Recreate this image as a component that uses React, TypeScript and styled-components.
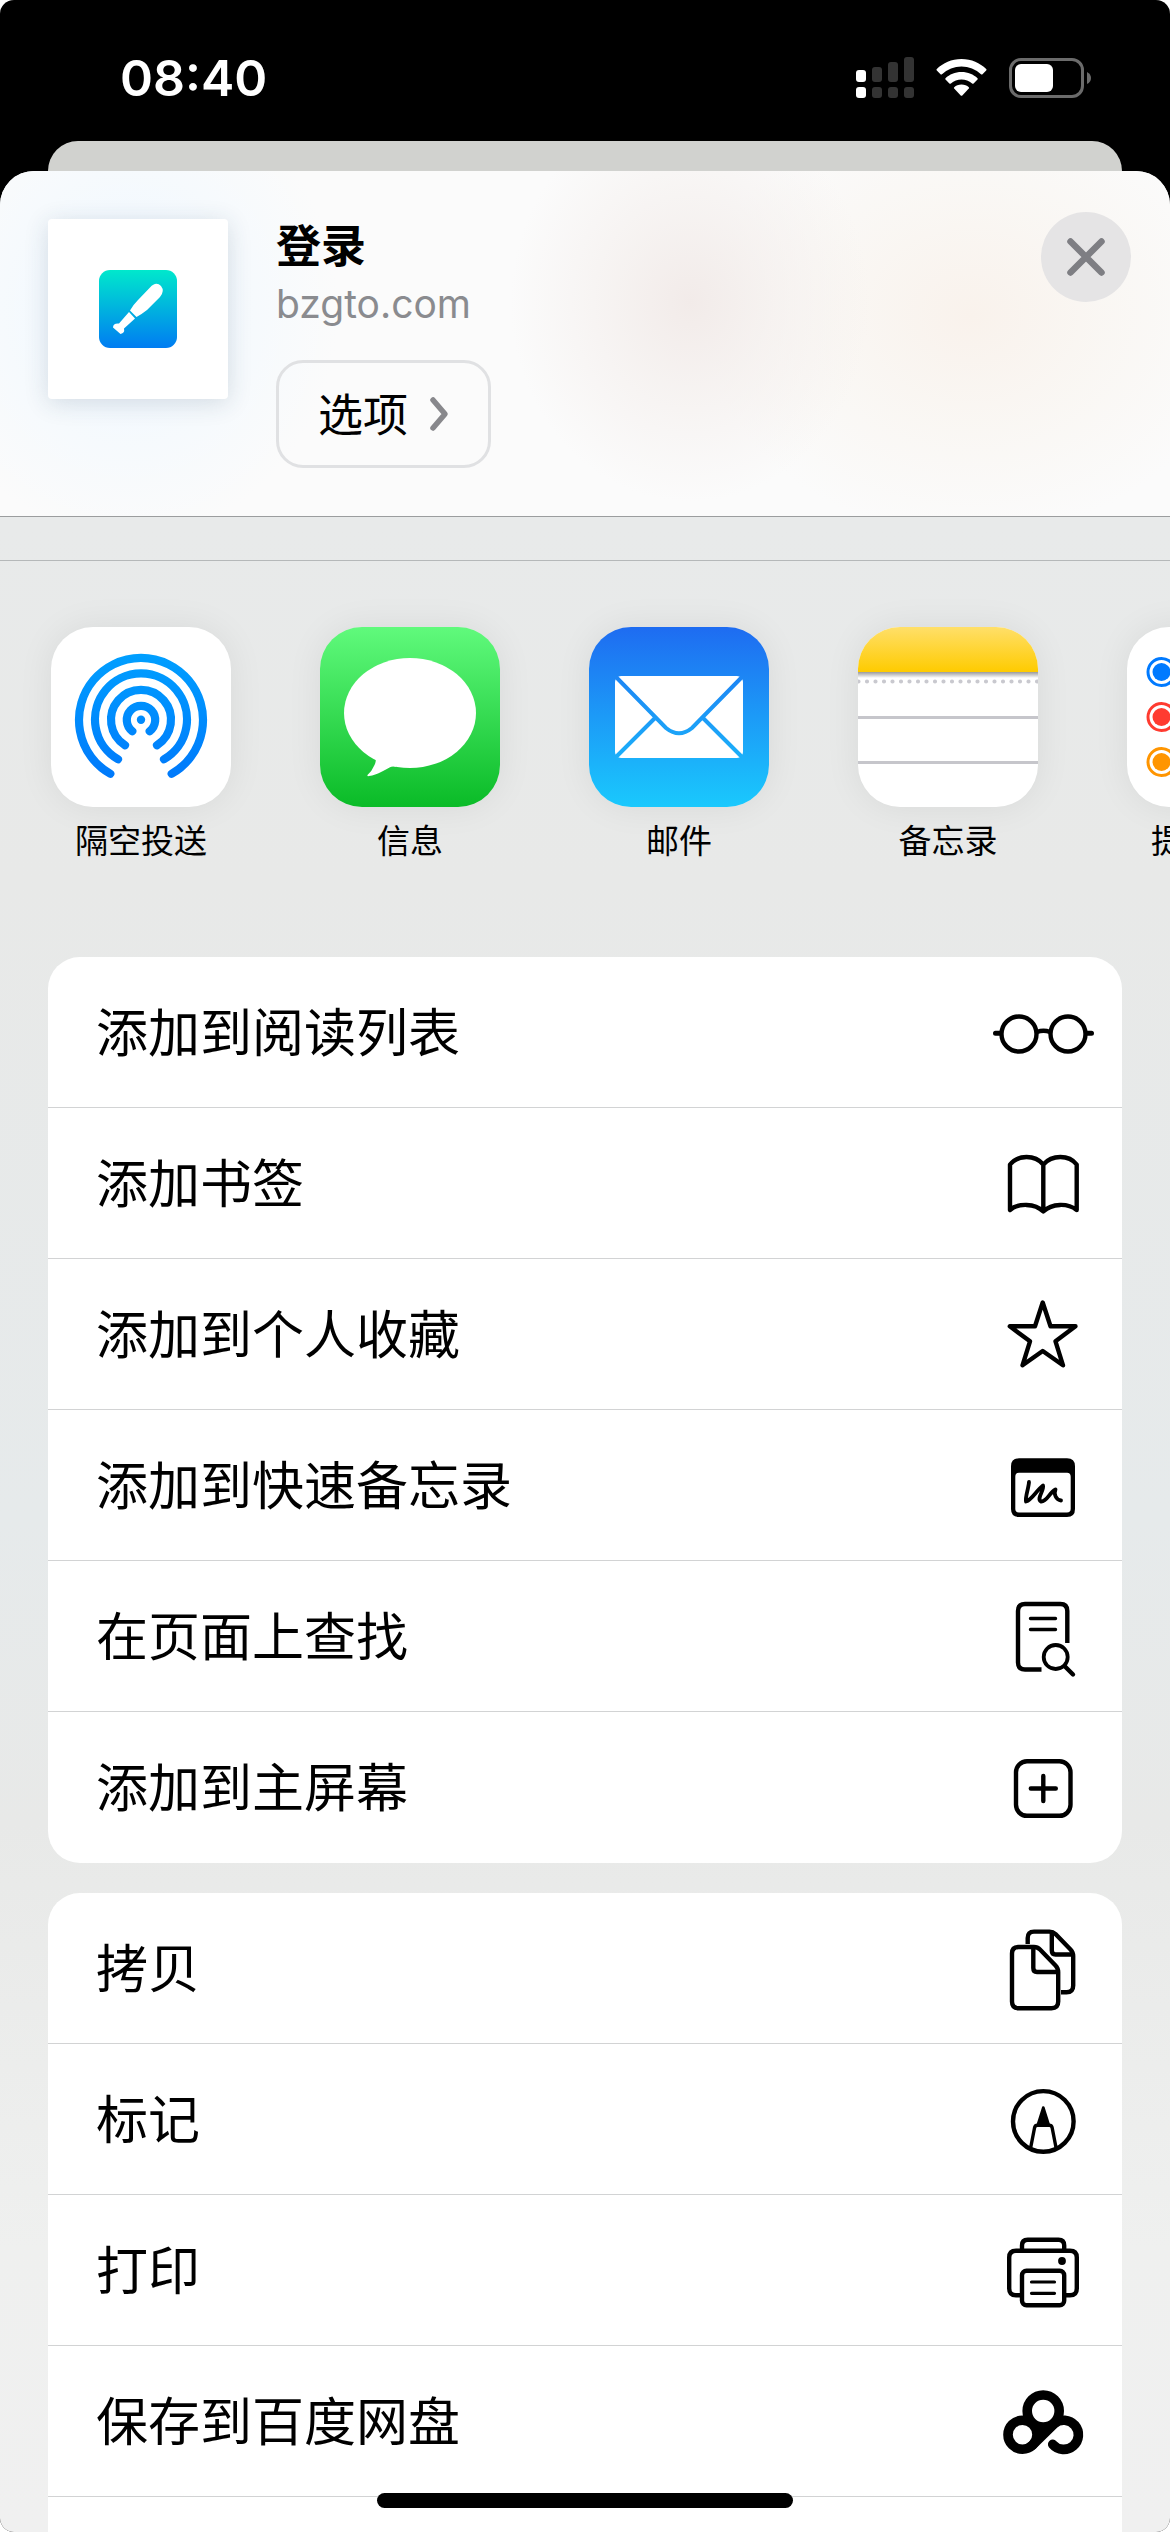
import React from "react";
import styled, { createGlobalStyle } from "styled-components";

const GlobalStyle = createGlobalStyle`
  * { box-sizing: border-box; }
  body {
    margin: 0;
    background: #fff;
    color: #000;
    font-family: Inter, "Noto Sans CJK SC", sans-serif;
  }
  button {
    margin: 0;
    padding: 0;
    border: 0;
    background: none;
    color: inherit;
    font: inherit;
    cursor: pointer;
  }
  h1, p, ul { margin: 0; padding: 0; }
  ul { list-style: none; }
  svg { display: block; flex: none; }
`;

const Screen = styled.div`
  position: relative;
  display: flex;
  flex-direction: column;
  height: 100vh;
  overflow: hidden;
  background: #000;
  border-radius: 14px;
`;

const StatusBar = styled.header`
  display: flex;
  align-items: center;
  justify-content: space-between;
  flex: none;
  height: 141px;
  padding: 15px 78px 0 120px;
  color: #fff;
`;

const Clock = styled.time`
  font-size: 50px;
  font-weight: 600;
  line-height: 60px;
`;

const BackSheet = styled.div`
  flex: none;
  height: 30px;
  margin: 0 48px;
  background: #d1d2cf;
  border-radius: 30px 30px 0 0;
`;

const Sheet = styled.main`
  display: flex;
  flex-direction: column;
  flex: 1;
  min-height: 0;
  overflow: hidden;
  border-radius: 34px 34px 0 0;
  background: linear-gradient(
    180deg,
    #e8eaea 15%,
    #e8e9e8 30%,
    #e6eaeb 57%,
    #e8e9e8 70%,
    #eff0ef 88%,
    #f0f0f0 100%
  );
`;

const SheetHeader = styled.section`
  display: flex;
  align-items: flex-start;
  flex: none;
  height: 346px;
  padding: 41px 39px 0 48px;
  border-bottom: 1px solid #9b9d9e;
  background:
    radial-gradient(210px 230px at 11% 40%, #ecf5ff 0%, #f2f9ffb0 50%, #fbfbfb00 100%),
    radial-gradient(180px 200px at 59% 38%, #f2ebe9 0%, #f4efedb0 45%, #fbfbfb00 100%),
    radial-gradient(270px 220px at 83% 42%, #f9f2ec 0%, #f9f5f0b0 50%, #fbfbfb00 100%),
    #fbfbfb;
`;

const Thumbnail = styled.div`
  display: grid;
  place-items: center;
  flex: none;
  width: 180px;
  height: 180px;
  margin-top: 7px;
  background: #fff;
  border-radius: 4px;
  box-shadow: 0 4px 24px rgba(40, 60, 90, 0.16);
`;

const SiteInfo = styled.div`
  display: flex;
  flex-direction: column;
  align-items: flex-start;
  flex: 1;
  margin-left: 48px;
`;

const SiteTitle = styled.h1`
  padding-top: 2px;
  font-size: 45px;
  font-weight: 700;
  line-height: 66px;
`;

const SiteDomain = styled.p`
  font-size: 39px;
  line-height: 48px;
  color: #8a8b8f;
`;

const OptionsButton = styled.button`
  display: flex;
  align-items: center;
  gap: 21px;
  height: 108px;
  margin-top: 32px;
  padding: 0 39px;
  border: 3px solid #e0e1e3;
  border-radius: 27px;
  font-size: 45px;
  line-height: 66px;
`;

const CloseButton = styled.button`
  display: grid;
  place-items: center;
  flex: none;
  width: 90px;
  height: 90px;
  border-radius: 50%;
  background: #e5e4e5;
`;

const SheetDivider = styled.div`
  flex: none;
  height: 44px;
  border-bottom: 1px solid #b5b8b9;
`;

const AppRow = styled.ul`
  display: flex;
  flex: none;
  gap: 89px;
  padding: 66px 51px 96px;
  overflow: hidden;
`;

const AppButton = styled.button`
  display: flex;
  flex-direction: column;
  align-items: center;
  gap: 14px;
  width: 180px;
  font-size: 33px;
  line-height: 40px;
  white-space: nowrap;
`;

const AppTile = styled.span<{ $fill: string }>`
  display: block;
  width: 180px;
  height: 180px;
  overflow: hidden;
  border-radius: 42px;
  background: ${(p) => p.$fill};
  box-shadow: 0 0 36px rgba(0, 0, 0, 0.07);
`;

const ActionCard = styled.ul<{ $open?: boolean }>`
  flex: ${(p) => (p.$open ? "1" : "none")};
  min-height: 0;
  margin: 0 48px ${(p) => (p.$open ? "0" : "30px")};
  overflow: hidden;
  background: #fff;
  border-radius: ${(p) => (p.$open ? "32px 32px 0 0" : "32px")};
`;

const ActionItem = styled.li<{ $line: boolean }>`
  height: 151px;
  border-bottom: 1px solid ${(p) => (p.$line ? "#d2d3d4" : "transparent")};
`;

const ActionButton = styled.button`
  display: flex;
  align-items: center;
  justify-content: space-between;
  width: 100%;
  height: 100%;
  padding: 0 27px 0 48px;
  text-align: left;
`;

const ButtonLabel = styled.span`
  padding-top: 4px;
`;

const ActionLabel = styled(ButtonLabel)`
  font-size: 52px;
  line-height: 76px;
`;

const HomeIndicator = styled.div`
  position: absolute;
  bottom: 24px;
  left: 50%;
  width: 416px;
  height: 15px;
  margin-left: -208px;
  border-radius: 8px;
  background: #000;
`;

const StatusIcons = () => (
  <svg width="236" height="42" viewBox="0 0 236 42" role="img" aria-label="信号、无线局域网、电池">
    <g fill="#fff">
      <rect x="0" y="13" width="10" height="12" rx="3" />
      <rect x="0" y="30" width="10" height="11" rx="3" />
    </g>
    <g fill="#333">
      <rect x="16" y="10" width="10" height="15" rx="3" />
      <rect x="32" y="5" width="10" height="20" rx="3" />
      <rect x="48" y="0" width="10" height="25" rx="3" />
      <rect x="16" y="30" width="10" height="11" rx="3" />
      <rect x="32" y="30" width="10" height="11" rx="3" />
      <rect x="48" y="30" width="10" height="11" rx="3" />
    </g>
    <g fill="#fff">
      <path d="M105.500 2 C95.500 2 87 6 80.800 12 Q80.200 12.700 80.800 13.400 L84.500 17.200 Q85.200 17.900 86 17.200 A28.500 28.500 0 0 1 125 17.200 Q125.800 17.900 126.500 17.200 L130.200 13.400 Q130.800 12.700 130.200 12 C124 6 115.500 2 105.500 2Z" />
      <path d="M105.500 15 C99 15 93.500 17.500 89.500 21.200 Q88.900 21.900 89.500 22.600 L93.400 26.400 Q94.100 27 94.900 26.400 A16.500 16.500 0 0 1 116.100 26.400 Q116.900 27 117.600 26.400 L121.500 22.600 Q122.100 21.900 121.500 21.200 C117.500 17.500 112 15 105.500 15Z" />
      <path d="M105.500 27.500 C102.500 27.500 100 28.600 98.200 30.200 Q97.600 30.900 98.200 31.600 L104.700 38.400 Q105.500 39.200 106.300 38.400 L112.800 31.600 Q113.400 30.900 112.800 30.200 C111 28.600 108.500 27.500 105.500 27.500Z" />
    </g>
    <rect x="154.500" y="2.500" width="72" height="37" rx="10.500" fill="none" stroke="#6b6b6b" strokeWidth="3" />
    <rect x="159" y="7" width="38" height="28" rx="6" fill="#fff" />
    <path d="M231 15 Q235 17 235 21 T231 27Z" fill="#6b6b6b" />
  </svg>
);

const SiteLogo = () => (
  <svg width="78" height="78" viewBox="0 0 78 78" aria-hidden="true">
    <defs>
      <linearGradient id="logo" x1="0" y1="0" x2="0" y2="1">
        <stop offset="0" stopColor="#00e8cc" />
        <stop offset="1" stopColor="#007cf2" />
      </linearGradient>
    </defs>
    <rect width="78" height="78" rx="11" fill="url(#logo)" />
    <g fill="#fff">
      <path d="M31 40.500 Q34 35 39 30 L51 17.500 Q57 11 62 16 Q66 21 61 27 L48 40 Q43 44 37.500 47Z" />
      <path d="M30 42 L36 48.500 L25 58.500 Q26 63 21.500 64 L14 57.500 Q14 53 20 53.500Z" />
    </g>
  </svg>
);

const ChevronIcon = () => (
  <svg width="20" height="36" viewBox="0 0 20 36" fill="none" stroke="#88888c" strokeWidth="5.500" strokeLinecap="round" strokeLinejoin="round" aria-hidden="true">
    <path d="M4 4 L16 18 L4 32" />
  </svg>
);

const CloseIcon = () => (
  <svg width="40" height="40" viewBox="0 0 40 40" stroke="#7e7e83" strokeWidth="6.500" strokeLinecap="round" aria-hidden="true">
    <path d="M4.500 4.500 L35.500 35.500 M35.500 4.500 L4.500 35.500" />
  </svg>
);

const AppArt = ({ children }: { children: React.ReactNode }) => (
  <svg width="180" height="180" viewBox="0 0 180 180" fill="none" aria-hidden="true">
    {children}
  </svg>
);

const AirDropArt = () => (
  <AppArt>
    <defs>
      <linearGradient id="air" gradientUnits="userSpaceOnUse" x1="0" y1="27" x2="0" y2="152">
        <stop offset="0" stopColor="#009fff" />
        <stop offset="1" stopColor="#0079fb" />
      </linearGradient>
    </defs>
    <g stroke="url(#air)" strokeWidth="8.200" strokeLinecap="round">
      <path d="M59.300 146.800 A62 62 0 1 1 120.700 146.800" />
      <path d="M67 132.300 A46 46 0 1 1 113 132.300" />
      <path d="M74 118.200 A30 30 0 1 1 106 118.200" />
      <path d="M81.300 104.200 A14.200 14.200 0 1 1 98.700 104.200" />
    </g>
    <circle cx="90" cy="92.700" r="4.200" fill="url(#air)" />
  </AppArt>
);

const MessagesArt = () => (
  <AppArt>
    <ellipse cx="90" cy="86" rx="66" ry="55" fill="#fff" />
    <path d="M52 127 Q58 131 54.500 138 Q52 144 47.500 148 Q47 149.500 49 149 C58 147.500 64 143.500 70 140.200 Q72 139 76 139.700 L74 120Z" fill="#fff" />
  </AppArt>
);

const MailArt = () => (
  <AppArt>
    <defs>
      <linearGradient id="mail" gradientUnits="userSpaceOnUse" x1="0" y1="0" x2="0" y2="180">
        <stop offset="0" stopColor="#1e6cf1" />
        <stop offset="1" stopColor="#1ac9fd" />
      </linearGradient>
    </defs>
    <rect x="26" y="49" width="128" height="82" rx="6" fill="#fff" />
    <path
      d="M27 50 L77 101 Q90 111.500 103 101 L153 50 M66.500 90.500 L27 130 M113.500 90.500 L153 130"
      stroke="url(#mail)"
      strokeWidth="4"
    />
  </AppArt>
);

const NotesArt = () => (
  <AppArt>
    <defs>
      <linearGradient id="notes" x1="0" y1="0" x2="0" y2="1">
        <stop offset="0" stopColor="#ffdf69" />
        <stop offset="1" stopColor="#fecb00" />
      </linearGradient>
      <linearGradient id="fold" x1="0" y1="0" x2="0" y2="1">
        <stop offset="0" stopColor="#9a9a9a" />
        <stop offset="1" stopColor="#ffffff" />
      </linearGradient>
    </defs>
    <rect width="180" height="45" fill="url(#notes)" />
    <rect y="45" width="180" height="6" fill="url(#fold)" />
    <path d="M0.500 54.500 H181" stroke="#c9c9cf" strokeWidth="4.200" strokeLinecap="round" strokeDasharray="0 8.500" />
    <path d="M0 90.500 H180 M0 135.500 H180" stroke="#c6c6cb" strokeWidth="3" />
  </AppArt>
);

const RemindersArt = () => (
  <AppArt>
    {["#007aff", "#ff3b30", "#ff9500"].map((color, i) => (
      <g key={color}>
        <circle cx="34.500" cy={45 + i * 45} r="13.500" stroke={color} strokeWidth="3" />
        <circle cx="34.500" cy={45 + i * 45} r="9" fill={color} />
        <path d={`M62 ${45 + i * 45} H180`} stroke="#c6c6cb" strokeWidth="3" />
      </g>
    ))}
  </AppArt>
);

const Glyph = ({ children }: { children: React.ReactNode }) => (
  <svg width="104" height="104" viewBox="0 0 104 104" fill="none" stroke="#000" strokeWidth="4.400" strokeLinecap="round" strokeLinejoin="round" aria-hidden="true">
    {children}
  </svg>
);

const GlassesIcon = () => (
  <Glyph>
    <circle cx="28" cy="54" r="17.500" />
    <circle cx="77" cy="54" r="17.500" />
    <path d="M46 52 Q52.500 49.500 59 52" />
    <path d="M4.500 53.200 H9 M96 53.200 H100.500" strokeWidth="5" />
  </Glyph>
);

const BookIcon = () => (
  <Glyph>
    <path d="M19 33.500 C27 23.500 44 23.500 52.300 33.500 C61 23.500 78 23.500 85.700 33.500 V79 C77 72 61 72 52.300 80.500 C44 72 27 72 19 79Z M52.300 33.500 V80" />
  </Glyph>
);

const StarIcon = () => (
  <Glyph>
    <path d="M51.700 20.500 L59.500 44.300 H84.500 L64.500 59.300 L72 83.300 L51.700 69 L31.500 83.300 L39 59.300 L18.800 44.300 H44Z" />
  </Glyph>
);

const QuickNoteIcon = () => (
  <Glyph>
    <path
      d="M28 25.300 H76 Q84 25.300 84 33.300 V76 Q84 84 76 84 H28 Q20 84 20 76 V33.300 Q20 25.300 28 25.300Z M28 39.700 Q24.300 39.700 24.300 43.700 V75.700 Q24.300 79.500 28 79.500 H76 Q79.700 79.500 79.700 75.700 V43.700 Q79.700 39.700 76 39.700Z"
      fill="#000"
      fillRule="evenodd"
      stroke="none"
    />
    <path d="M38 49 C37.500 56 34 64 35 68.500 C41 66.500 45 58 52 52.500 C53.500 57 45 66 50 68.500 C56 69 58 60 64.500 56.500 C62.500 61 65 67 70 67.500" strokeWidth="3.800" />
  </Glyph>
);

const FindIcon = () => (
  <Glyph>
    <path d="M76.300 59 V27 Q76.300 20 69.300 20 H34 Q27 20 27 27 V78.500 Q27 85.500 34 85.500 H50.500" strokeLinecap="butt" />
    <path d="M39.500 34.500 H64.500 M39.500 45.500 H64.500" strokeWidth="3.400" />
    <circle cx="64.700" cy="73" r="12" strokeWidth="3.800" />
    <path d="M73.500 82 L82 90.500" strokeWidth="4.400" />
  </Glyph>
);

const AddIcon = () => (
  <Glyph>
    <rect x="25" y="26.300" width="54.500" height="54.500" rx="11" />
    <path d="M39.800 53.500 H64.800 M52.300 41 V66" />
  </Glyph>
);

const CopyIcon = () => (
  <Glyph>
    <path d="M36.700 28 V22 Q36.700 15.600 43 15.600 H58.500 Q62 15.600 64.500 18 L79.500 33.500 Q82.200 36.300 82.200 40 V69.500 Q82.200 76.300 75.500 76.300 H70" strokeLinecap="butt" />
    <path d="M60.800 16.500 V34.500 Q60.800 38.500 64.500 38.500 H81" />
    <path d="M27.500 31 H43 Q46.500 31 49 33.500 L64.500 49.500 Q67.200 52.300 67.200 56 V85.500 Q67.200 92.200 60.500 92.200 H27.500 Q21 92.200 21 85.500 V37.500 Q21 31 27.500 31Z" />
    <path d="M42.300 32 V52 Q42.300 56 46 56 H66" />
  </Glyph>
);

const MarkupIcon = () => (
  <Glyph>
    <circle cx="52.300" cy="54.400" r="30.300" />
    <path d="M39.600 81 L43.600 60.500 Q44.200 58.300 46.500 58.300 H58.200 Q60.500 58.300 61.100 60.500 L65.100 81" strokeWidth="3.400" />
    <path d="M52.300 40.500 L46.600 58.500 H58Z" fill="#000" strokeWidth="2.600" />
  </Glyph>
);

const PrinterIcon = () => (
  <Glyph>
    <path d="M31 32 V27.500 Q31 21.800 36.700 21.800 H67.500 Q73.200 21.800 73.200 27.500 V32" strokeLinecap="butt" />
    <path d="M30 77.300 H25 Q18.200 77.300 18.200 70.500 V39.500 Q18.200 32.700 25 32.700 H79 Q85.800 32.700 85.800 39.500 V70.500 Q85.800 77.300 79 77.300 H74" strokeLinecap="butt" />
    <rect x="31" y="52.700" width="42.200" height="34.600" rx="4.500" />
    <path d="M40.500 64 H63.500 M40.500 75.300 H63.500" strokeWidth="3.200" />
    <circle cx="71" cy="43" r="3.900" fill="#000" stroke="none" />
  </Glyph>
);

const CloudDiskIcon = () => (
  <Glyph>
    <g strokeWidth="9.600">
      <circle cx="52.200" cy="42" r="16" />
      <circle cx="31.500" cy="65.700" r="14.500" />
      <path d="M61.700 75.300 A14.600 14.600 0 1 0 63.200 54.800 L41 76.600" />
    </g>
    <path d="M42.500 55 H62 L43.500 73Z" fill="#000" stroke="none" />
  </Glyph>
);

const apps = [
  { name: "隔空投送", fill: "#fff", Art: AirDropArt },
  { name: "信息", fill: "linear-gradient(#60fa7c, #0abb27)", Art: MessagesArt },
  { name: "邮件", fill: "linear-gradient(#1e6cf1, #1ac9fd)", Art: MailArt },
  { name: "备忘录", fill: "#fff", Art: NotesArt },
  { name: "提醒事项", fill: "#fff", Art: RemindersArt },
];

const pageActions = [
  { name: "添加到阅读列表", Icon: GlassesIcon },
  { name: "添加书签", Icon: BookIcon },
  { name: "添加到个人收藏", Icon: StarIcon },
  { name: "添加到快速备忘录", Icon: QuickNoteIcon },
  { name: "在页面上查找", Icon: FindIcon },
  { name: "添加到主屏幕", Icon: AddIcon },
];

const shareActions = [
  { name: "拷贝", Icon: CopyIcon },
  { name: "标记", Icon: MarkupIcon },
  { name: "打印", Icon: PrinterIcon },
  { name: "保存到百度网盘", Icon: CloudDiskIcon },
];

type Action = { name: string; Icon: () => React.ReactElement };

const Actions = ({ items, open }: { items: Action[]; open?: boolean }) => (
  <ActionCard $open={open}>
    {items.map(({ name, Icon }, i) => (
      <ActionItem key={name} $line={!!open || i < items.length - 1}>
        <ActionButton type="button">
          <ActionLabel>{name}</ActionLabel>
          <Icon />
        </ActionButton>
      </ActionItem>
    ))}
  </ActionCard>
);

export default function App() {
  return (
    <Screen>
      <GlobalStyle />
      <StatusBar>
        <Clock>08:40</Clock>
        <StatusIcons />
      </StatusBar>
      <BackSheet />
      <Sheet>
        <SheetHeader>
          <Thumbnail>
            <SiteLogo />
          </Thumbnail>
          <SiteInfo>
            <SiteTitle>登录</SiteTitle>
            <SiteDomain>bzgto.com</SiteDomain>
            <OptionsButton type="button">
              <ButtonLabel>选项</ButtonLabel>
              <ChevronIcon />
            </OptionsButton>
          </SiteInfo>
          <CloseButton type="button" aria-label="关闭">
            <CloseIcon />
          </CloseButton>
        </SheetHeader>
        <SheetDivider />
        <AppRow>
          {apps.map(({ name, fill, Art }) => (
            <li key={name}>
              <AppButton type="button">
                <AppTile $fill={fill}>
                  <Art />
                </AppTile>
                {name}
              </AppButton>
            </li>
          ))}
        </AppRow>
        <Actions items={pageActions} />
        <Actions items={shareActions} open />
      </Sheet>
      <HomeIndicator />
    </Screen>
  );
}
